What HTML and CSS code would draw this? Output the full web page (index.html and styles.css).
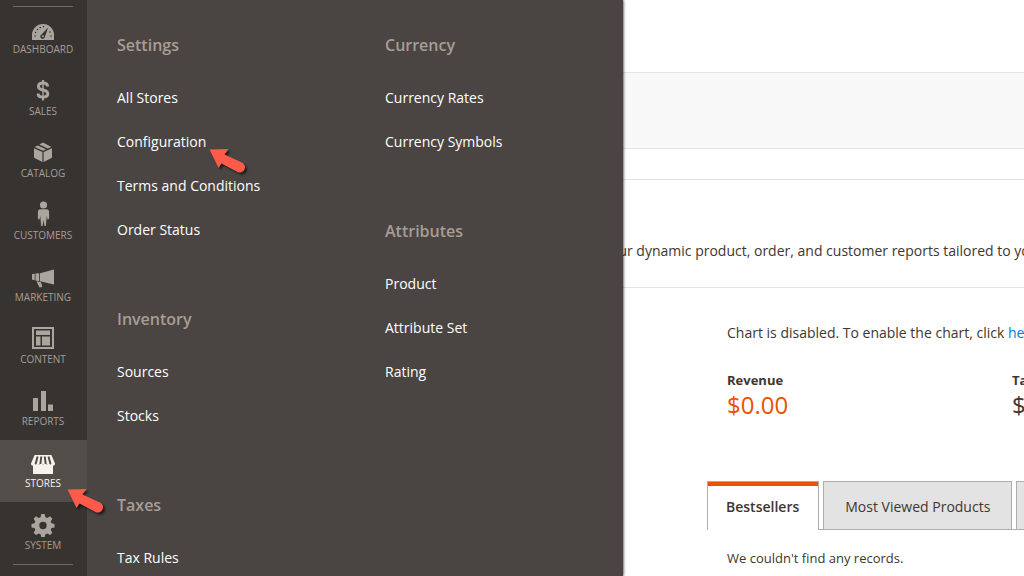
FILE: index.html
```html
<!DOCTYPE html>
<html lang="en">
<head>
<meta charset="utf-8">
<title>Dashboard</title>
<link rel="stylesheet" href="styles.css">
</head>
<body>
<div class="page">
  <nav class="menu" aria-label="Main">
    <ul class="menu-list">
      <li><a class="menu-item" href="#">
        <svg class="icon" viewBox="0 -3 24 24"><path d="M1 20v-5a11 11 0 0 1 22 0v5z"/><path class="cut" d="M17.200 7.500l-3.300 9.200a2.300 2.300 0 1 1-3.600-2z"/><circle cx="12" cy="16.300" r="1"/><g class="cut"><circle cx="4" cy="16" r=".8"/><circle cx="4.600" cy="12.500" r=".8"/><circle cx="6.500" cy="9.500" r=".8"/><circle cx="9.200" cy="7.600" r=".8"/><circle cx="12.500" cy="6.800" r=".8"/><circle cx="19" cy="12" r=".8"/><circle cx="20" cy="16" r=".8"/></g></svg>
        <span>Dashboard</span></a></li>
      <li><a class="menu-item" href="#">
        <svg class="icon" viewBox="0 1 24 24"><path class="line" d="M16.500 8.500C16.500 6.200 14.800 5 12 5S7.500 6.300 7.500 8.400c0 2.300 2 3 4.500 3.600s4.800 1.300 4.800 3.800c0 2.100-1.900 3.300-4.800 3.300s-4.900-1.200-4.900-3.700" stroke-width="3"/><path d="M11 2h2v3h-2zM11 19h2v3.500h-2zM11.300 5h1.400v14h-1.400z"/></svg>
        <span>Sales</span></a></li>
      <li><a class="menu-item" href="#">
        <svg class="icon" viewBox="0 1 24 24"><path d="M3 8.300l8.400 3.800v10L3 17.800zM21 8.300l-8.400 3.800v10l8.400-4.300zM3.600 6.900l3-1.500 8.500 3.900-3.100 1.500zM8.300 4.600L12 2.600l8.400 4.300-3.600 1.700z"/></svg>
        <span>Catalog</span></a></li>
      <li><a class="menu-item" href="#">
        <svg class="icon icon-tall" viewBox="0 0 24 26"><circle cx="12.500" cy="4" r="3.600"/><path d="M9.500 8.300h6c1.700 0 2.600 1.200 2.600 3v6.500l-1.500 1-.9-4-.8 10.200h-1.400L12.500 19l-1 6h-1.400l-.8-10.200-.9 4-1.500-1v-6.500c0-1.800.9-3 2.600-3z"/></svg>
        <span>Customers</span></a></li>
      <li><a class="menu-item" href="#">
        <svg class="icon" viewBox="0 -1 24 24"><path d="M23 3.500v15l-14-3.200V7.200zM1 8.300l2.700-.8v6.800L1 13.600zM4.500 7.500L8.200 7.300v8l-3.700-.8zM5.500 15.300l4.500 1 1.300 4.800-2.800.4z"/></svg>
        <span>Marketing</span></a></li>
      <li><a class="menu-item" href="#">
        <svg class="icon" viewBox="0 1 24 24"><path fill-rule="evenodd" d="M1 1h22v22H1zM3 3v18h18V3z"/><path d="M5 4.500h14V9H5zM5 10.500h4.500v9H5zM11 10.500h8v9h-8z"/></svg>
        <span>Content</span></a></li>
      <li><a class="menu-item" href="#">
        <svg class="icon" viewBox="0 0 24 24"><path d="M2 9h5v13H2zM10 2h5v20h-5zM17 15.500h5V22h-5z"/></svg>
        <span>Reports</span></a></li>
      <li><a class="menu-item is-active" href="#" aria-expanded="true">
        <svg class="icon" viewBox="0 -2 24 24"><path d="M2 12h20v9H2zM3.600 2h16.800L24 10.500a2.200 2.200 0 0 1-4.300.8 2.200 2.200 0 0 1-3.800 0 2.200 2.200 0 0 1-3.900 0 2.200 2.200 0 0 1-3.900 0 2.200 2.200 0 0 1-3.800 0A2.200 2.200 0 0 1 0 10.500z"/><path class="stripe" d="M6.600 3.500l-2 7.500M10.300 3.500l-.9 7.500M13.800 3.500l.9 7.500M17.500 3.500l2 7.500"/></svg>
        <span>Stores</span></a></li>
      <li><a class="menu-item" href="#">
        <svg class="icon" viewBox="0 0 24 24"><path fill-rule="evenodd" d="M10.300 1h3.400l.7 3.200 1.900.8L19 3.300l2.400 2.400-1.700 2.700.8 1.900 3 .7v3.400l-3 .7-.8 1.900 1.700 2.700-2.400 2.400-2.700-1.700-1.900.8-.7 2.800h-3.400l-.7-2.800-1.900-.8L5 22.100l-2.400-2.400L4.300 17l-.8-1.900-3-.7V11l3-.7.8-1.900-1.700-2.700L5 3.300 7.700 5l1.900-.8zM12 8.800a3.700 3.700 0 1 0 0 7.400 3.700 3.700 0 0 0 0-7.400z"/></svg>
        <span>System</span></a></li>
    </ul>
  </nav>

  <section class="submenu" aria-label="Stores">
    <div class="submenu-column">
      <div class="group">
        <h2 class="group-title">Settings</h2>
        <ul class="group-list">
          <li><a href="#">All Stores</a></li>
          <li><a href="#">Configuration</a></li>
          <li><a href="#">Terms and Conditions</a></li>
          <li><a href="#">Order Status</a></li>
        </ul>
      </div>
      <div class="group">
        <h2 class="group-title">Inventory</h2>
        <ul class="group-list">
          <li><a href="#">Sources</a></li>
          <li><a href="#">Stocks</a></li>
        </ul>
      </div>
      <div class="group">
        <h2 class="group-title">Taxes</h2>
        <ul class="group-list">
          <li><a href="#">Tax Rules</a></li>
        </ul>
      </div>
    </div>
    <div class="submenu-column">
      <div class="group">
        <h2 class="group-title">Currency</h2>
        <ul class="group-list">
          <li><a href="#">Currency Rates</a></li>
          <li><a href="#">Currency Symbols</a></li>
        </ul>
      </div>
      <div class="group">
        <h2 class="group-title">Attributes</h2>
        <ul class="group-list">
          <li><a href="#">Product</a></li>
          <li><a href="#">Attribute Set</a></li>
          <li><a href="#">Rating</a></li>
        </ul>
      </div>
    </div>
  </section>

  <main class="content">
    <div class="toolbar"></div>
    <div class="spacer"></div>
    <p class="banner">our dynamic product, order, and customer reports tailored to your customer data.</p>
    <div class="dashboard">
      <p class="notice">Chart is disabled. To enable the chart, click <a href="#">here</a>.</p>
      <dl class="totals">
        <div><dt>Revenue</dt><dd class="is-primary">$0.00</dd></div>
        <div><dt>Tax</dt><dd>$0.00</dd></div>
      </dl>
      <div class="tabs" role="tablist">
        <button class="tab is-current" role="tab" aria-selected="true">Bestsellers</button>
        <button class="tab" role="tab" aria-selected="false">Most Viewed Products</button>
        <button class="tab" role="tab" aria-selected="false">New Customers</button>
      </div>
      <p class="empty">We couldn't find any records.</p>
    </div>
  </main>

  <svg class="pointer pointer-configuration" viewBox="0 0 40 30" aria-hidden="true"><path d="M1.500 1.500l19-.5-4 5.500L34 14.500a5 5 0 0 1-4.500 9.500L13.500 15.500l-3 4.500z"/></svg>
  <svg class="pointer pointer-stores" viewBox="0 0 40 30" aria-hidden="true"><path d="M1.500 1.500l19-.5-4 5.500L34 14.500a5 5 0 0 1-4.500 9.500L13.500 15.500l-3 4.500z"/></svg>
</div>
</body>
</html>
```
FILE: styles.css
```css
* { box-sizing: border-box; }
body, h2, p, ul, dl, dd { margin: 0; }
ul { list-style: none; padding: 0; }
a { text-decoration: none; }

body {
  font-family: "Open Sans", "Noto Sans", sans-serif;
  font-size: 14px;
  line-height: 20px;
  color: #41362f;
  background: #fff;
}

.page {
  position: relative;
  display: flex;
  height: 100vh;
  overflow: hidden;
}

/* Sidebar */
.menu {
  flex: 0 0 87px;
  padding-top: 6px;
  background: #373330;
}
.menu-list::before,
.menu-list::after {
  content: "";
  display: block;
  height: 1px;
  margin: 0 14px 0 13px;
  background: #736963;
}
.menu-list::before { margin-bottom: -1px; }
.menu-item {
  display: flex;
  flex-direction: column;
  align-items: center;
  height: 62px;
  padding: 11px 1px 0 0;
  font-size: 10px;
  line-height: 16px;
  text-transform: uppercase;
  color: #a79d95;
}
.menu-item.is-active {
  background: #524d49;
  color: #f7f3eb;
}
.icon {
  width: 24px;
  height: 24px;
  fill: #aaa69e;
}
.icon-tall {
  height: 26px;
  margin-top: -2px;
}
.is-active .icon { fill: #f7f3eb; }
.icon .cut { fill: #373330; }
.icon .line { fill: none; stroke: #aaa69e; }
.icon .stripe { fill: none; stroke: #524d49; stroke-width: 2; }

/* Flyout */
.submenu {
  position: absolute;
  top: 0;
  bottom: 0;
  left: 87px;
  display: flex;
  width: 536px;
  padding: 34px 0 0 30px;
  background: #4a4542;
  box-shadow: 0 0 3px #000;
  clip-path: inset(0 -4px 0 0);
}
.submenu-column { flex: 0 0 268px; }
.group { margin-bottom: 56px; }
.group-title {
  margin-bottom: 20px;
  font-size: 16px;
  line-height: 22px;
  font-weight: 600;
  color: #a79d95;
}
.group-list a {
  display: block;
  padding: 12px 0;
  color: #fff;
}

/* Content */
.content {
  flex: 1;
  min-width: 0;
  padding-top: 72px;
  overflow: hidden;
}
.toolbar {
  height: 77px;
  border: solid #e3e3e3;
  border-width: 1px 0;
  background: #f8f8f8;
}
.spacer { height: 30px; }
.banner {
  height: 109px;
  padding: 61px 0 0 523px;
  border: solid #e3e3e3;
  border-width: 1px 0;
  white-space: nowrap;
}
.dashboard {
  padding: 35px 0 0 620px;
  white-space: nowrap;
}
.notice { padding-left: 20px; }
.notice a { color: #007bdb; }
.totals {
  display: grid;
  grid-template-columns: repeat(2, 285px);
  padding: 28px 0 0 20px;
}
.totals dt {
  font-size: 13px;
  line-height: 18px;
  font-weight: 700;
}
.totals dd {
  font-size: 24px;
  line-height: 32px;
  font-weight: 500;
}
.totals .is-primary { color: #eb5202; }
.tabs {
  display: flex;
  gap: 4px;
  width: 600px;
  margin-top: 60px;
  box-shadow: inset 0 -1px #adadad;
}
.tab {
  height: 49px;
  padding: 2px 21px 0;
  border: 1px solid #adadad;
  background: #e3e3e3;
  font: inherit;
  color: #41362f;
}
.tab.is-current {
  padding: 2px 19px 0 18px;
  border-bottom: 0;
  background: #fff;
  box-shadow: inset 0 4px #eb5202;
  font-weight: 600;
}
.empty {
  padding: 18px 0 0 20px;
  font-size: 13px;
}

/* Pointers over the menus */
.pointer {
  position: absolute;
  width: 40px;
  height: 30px;
  fill: #ff5a4a;
  filter: drop-shadow(2px 2px 1px rgba(0, 0, 0, .6));
}
.pointer-configuration { left: 208px; top: 148px; }
.pointer-stores { left: 66px; top: 488px; }
```
